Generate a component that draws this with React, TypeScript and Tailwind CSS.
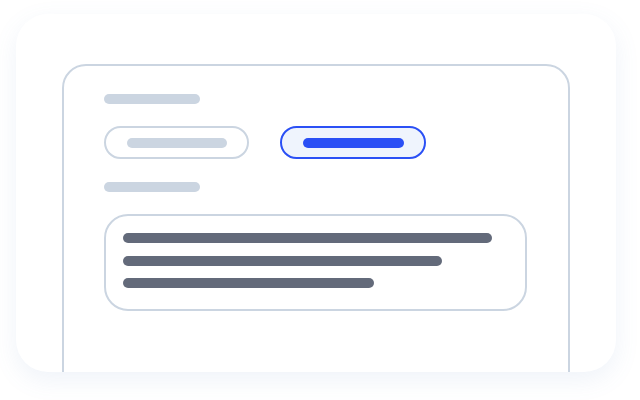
export default function App() {
  return (
    <div className="w-[640px] h-[400px] bg-white pt-[14px] pl-4">
      <div className="w-[600px] h-[358px] rounded-[32px] bg-white overflow-hidden shadow-[0_8px_24px_rgba(100,140,200,0.10)] px-[46px] pt-[50px]">
        <div className="h-[360px] rounded-t-3xl border-2 border-[#cbd5e1] px-10 pt-7">
          <div className="w-24 h-2.5 rounded-full bg-[#cbd5e1]" />

          <div className="mt-[22px] flex gap-[31px]">
            <div className="w-[145px] h-[33px] rounded-full border-2 border-[#cbd5e1] bg-white flex items-center justify-center">
              <div className="w-[100px] h-2.5 rounded-full bg-[#cbd5e1]" />
            </div>
            <div className="w-[146px] h-[33px] rounded-full border-2 border-[#2b50f5] bg-[#eff4fd] flex items-center justify-center">
              <div className="w-[101px] h-2.5 rounded-full bg-[#2a4ff5]" />
            </div>
          </div>

          <div className="mt-[23px] w-24 h-2.5 rounded-full bg-[#cbd5e1]" />

          <div className="mt-[22px] w-[423px] h-[97px] rounded-3xl border-2 border-[#cbd5e1] px-[17px] pt-[17px] flex flex-col gap-[12.5px]">
            <div className="w-[369px] h-2.5 rounded-full bg-[#636a7a]" />
            <div className="w-[319px] h-2.5 rounded-full bg-[#636a7a]" />
            <div className="w-[251px] h-2.5 rounded-full bg-[#636a7a]" />
          </div>
        </div>
      </div>
    </div>
  );
}
